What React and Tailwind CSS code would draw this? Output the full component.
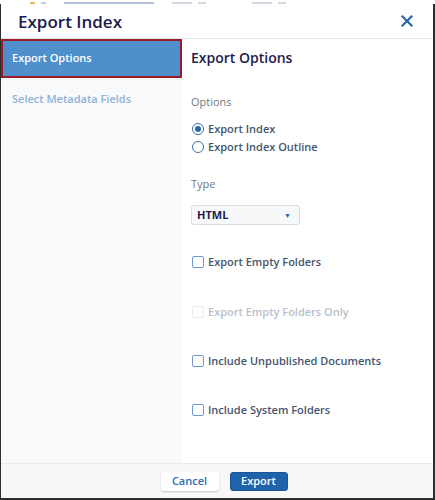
import React, { useState } from "react";

const CheckRow = ({ label, checked, disabled, onToggle, className }) => (
  <label
    className={
      "flex items-center h-[18px] gap-[4px] " +
      (disabled ? "cursor-default " : "cursor-pointer ") +
      className
    }
  >
    <span
      onClick={disabled ? undefined : onToggle}
      className={
        "w-[12px] h-[12px] ml-[1px] rounded-[2px] border-[1.5px] flex items-center justify-center " +
        (disabled ? "border-[#e6e9ee] bg-white" : "border-[#6f97c9] bg-white")
      }
    >
      {checked && <span className="w-[6px] h-[6px] bg-[#2a66ad] rounded-[1px]" />}
    </span>
    <span
      className={
        "text-[11px] font-semibold " + (disabled ? "text-[#b7bfcc]" : "text-[#46556f]")
      }
    >
      {label}
    </span>
  </label>
);

const RadioRow = ({ label, selected, onSelect }) => (
  <div onClick={onSelect} className="flex items-center h-[18px] gap-[4px] cursor-pointer">
    <span className="w-[12px] h-[12px] ml-[1px] rounded-full border-[1.5px] border-[#3e6da6] flex items-center justify-center bg-white">
      {selected && <span className="w-[6px] h-[6px] rounded-full bg-[#2a66ad]" />}
    </span>
    <span className="text-[11px] font-semibold text-[#46556f]">{label}</span>
  </div>
);

const App = () => {
  const [option, setOption] = useState("index");
  const [checks, setChecks] = useState({ empty: false, unpublished: false, system: false });
  const toggle = (k) => setChecks({ ...checks, [k]: !checks[k] });

  return (
    <div
      className="w-[435px] h-[500px] bg-white overflow-hidden"
      style={{ fontFamily: '"Open Sans", "Noto Sans", sans-serif' }}
    >
      {/* Page behind the dialog, mostly cut off */}
      <div className="h-[4px] flex items-end gap-[6px] pl-[30px] bg-white">
        <span className="w-[5px] h-[2px] bg-[#e8b060]" />
        <span className="w-[5px] h-[2px] bg-[#c0cfdf]" />
        <span className="w-[90px] h-[2px] ml-[12px] bg-[#b3c1d8]" />
        <span className="w-[20px] h-[2px] ml-[12px] bg-[#d3d8e0]" />
        <span className="w-[8px] h-[2px] bg-[#d3d8e0]" />
        <span className="w-[20px] h-[2px] ml-[40px] bg-[#d3d8e0]" />
        <span className="w-[8px] h-[2px] bg-[#d3d8e0]" />
      </div>

      <div className="h-[496px] flex flex-col border-l border-r-2 border-b-2 border-[#2e2e2e]">
        {/* Header */}
        <div className="h-[35px] shrink-0 flex items-center justify-between pl-[17px] pr-[20px] border-b border-[#dfe7ef]">
          <h1 className="text-[17px] font-semibold text-[#1d1b4c] leading-none">Export Index</h1>
          <svg width="12" height="12" viewBox="0 0 12 12" className="text-[#2767ae]">
            <path d="M1.5 1.5 L10.5 10.5 M10.5 1.5 L1.5 10.5" stroke="currentColor" strokeWidth="2.2" strokeLinecap="square" />
          </svg>
        </div>

        {/* Body */}
        <div className="flex flex-1 min-h-0">
          <div className="w-[181px] shrink-0 bg-[#f8f9fa]">
            <div className="h-[39px] bg-[#4f8fcb] border-2 border-[#9a1b27] flex items-center pl-[9px]">
              <span className="text-[11px] font-semibold text-white">Export Options</span>
            </div>
            <div className="h-[40px] flex items-center pl-[11px] mt-[1px]">
              <span className="text-[11px] font-semibold text-[#8fb2d8]">Select Metadata Fields</span>
            </div>
          </div>

          <div className="flex-1 bg-white pl-[9px] pt-[8px]">
            <h2 className="h-[20px] flex items-center text-[14px] font-semibold text-[#1d1b4c]">
              Export Options
            </h2>
            <div className="mt-[27px] h-[16px] flex items-center text-[11px] text-[#6f7784]">Options</div>
            <div className="mt-[10px]">
              <RadioRow label="Export Index" selected={option === "index"} onSelect={() => setOption("index")} />
              <RadioRow
                label="Export Index Outline"
                selected={option === "outline"}
                onSelect={() => setOption("outline")}
              />
            </div>
            <div className="mt-[20px] h-[16px] flex items-center text-[11px] text-[#6f7784]">Type</div>
            <div className="mt-[13px] w-[109px] h-[20px] rounded-[3px] border border-[#d9dee4] bg-[#f7f8fa] flex items-center justify-between pl-[5px] pr-[8px]">
              <span className="text-[11px] font-bold text-[#1d1b4c]">HTML</span>
              <span className="text-[7px] text-[#2767ae] leading-none">▼</span>
            </div>
            <CheckRow
              className="mt-[28px]"
              label="Export Empty Folders"
              checked={checks.empty}
              onToggle={() => toggle("empty")}
            />
            <CheckRow className="mt-[32px]" label="Export Empty Folders Only" disabled />
            <CheckRow
              className="mt-[31px]"
              label="Include Unpublished Documents"
              checked={checks.unpublished}
              onToggle={() => toggle("unpublished")}
            />
            <CheckRow
              className="mt-[31px]"
              label="Include System Folders"
              checked={checks.system}
              onToggle={() => toggle("system")}
            />
          </div>
        </div>

        {/* Footer */}
        <div className="h-[35px] shrink-0 border-t border-[#e8eaed] bg-[#f8f8f9] flex items-center justify-center gap-[11px] pl-[14px]">
          <button className="w-[58px] h-[19px] rounded-[3px] bg-white shadow-[0_1px_2px_rgba(0,0,0,0.2)] text-[11px] font-semibold text-[#2f6aad]">
            Cancel
          </button>
          <button className="w-[58px] h-[19px] rounded-[3px] bg-[#1f63aa] border border-[#1a5697] text-[11px] font-semibold text-white">
            Export
          </button>
        </div>
      </div>
    </div>
  );
};

export default App;
